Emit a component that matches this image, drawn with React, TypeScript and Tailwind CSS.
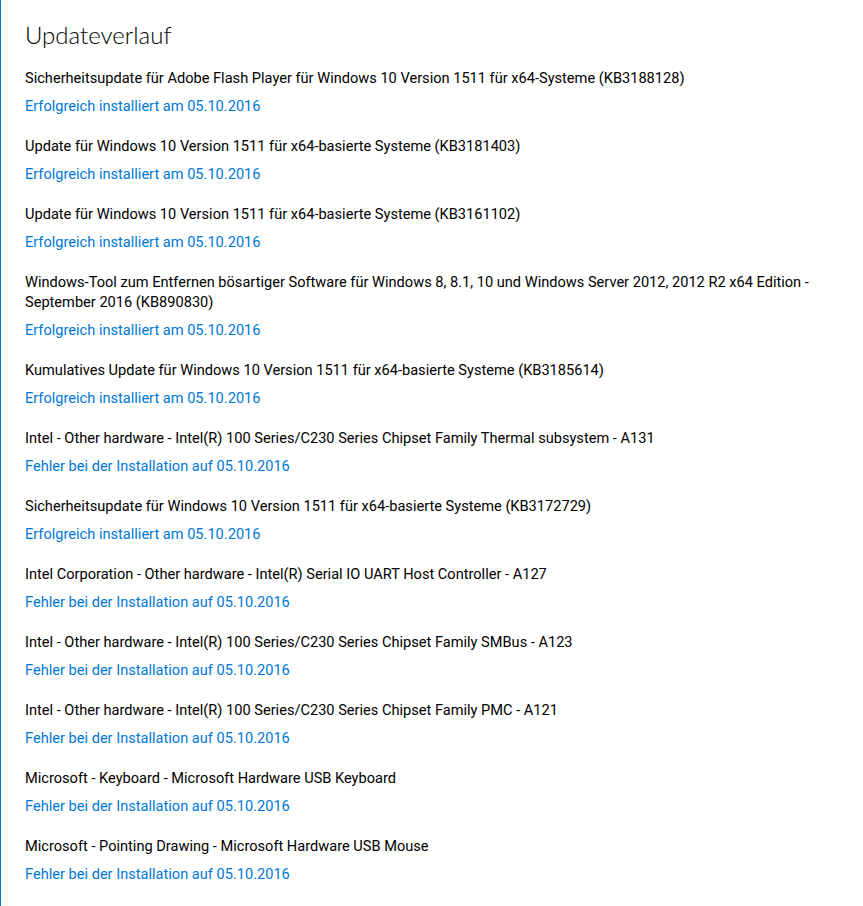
const updates: { title: string; ok: boolean }[] = [
  { title: "Sicherheitsupdate für Adobe Flash Player für Windows 10 Version 1511 für x64-Systeme (KB3188128)", ok: true },
  { title: "Update für Windows 10 Version 1511 für x64-basierte Systeme (KB3181403)", ok: true },
  { title: "Update für Windows 10 Version 1511 für x64-basierte Systeme (KB3161102)", ok: true },
  {
    title:
      "Windows-Tool zum Entfernen bösartiger Software für Windows 8, 8.1, 10 und Windows Server 2012, 2012 R2 x64 Edition - September 2016 (KB890830)",
    ok: true,
  },
  { title: "Kumulatives Update für Windows 10 Version 1511 für x64-basierte Systeme (KB3185614)", ok: true },
  { title: "Intel - Other hardware - Intel(R) 100 Series/C230 Series Chipset Family Thermal subsystem - A131", ok: false },
  { title: "Sicherheitsupdate für Windows 10 Version 1511 für x64-basierte Systeme (KB3172729)", ok: true },
  { title: "Intel Corporation - Other hardware - Intel(R) Serial IO UART Host Controller - A127", ok: false },
  { title: "Intel - Other hardware - Intel(R) 100 Series/C230 Series Chipset Family SMBus - A123", ok: false },
  { title: "Intel - Other hardware - Intel(R) 100 Series/C230 Series Chipset Family PMC - A121", ok: false },
  { title: "Microsoft - Keyboard - Microsoft Hardware USB Keyboard", ok: false },
  { title: "Microsoft - Pointing Drawing - Microsoft Hardware USB Mouse", ok: false },
];

export default function App() {
  return (
    <div className="min-h-[906px] w-[863px] border-l border-[#0078d7] bg-white pl-6 pr-4 font-['Roboto',sans-serif] text-black">
      <h1 className="pt-[19px] font-['Lato',sans-serif] text-[24px] font-light leading-8">Updateverlauf</h1>
      <ul className="mt-[17px] flex flex-col">
        {updates.map((u, i) => (
          <li key={i} className="mb-5 flex flex-col">
            <span className="text-[14.6px] leading-5">{u.title}</span>
            <a href="#" className="mt-2 w-fit text-[14.6px] leading-5 text-[#0078d7]">
              {u.ok ? "Erfolgreich installiert am 05.10.2016" : "Fehler bei der Installation auf 05.10.2016"}
            </a>
          </li>
        ))}
      </ul>
    </div>
  );
}
